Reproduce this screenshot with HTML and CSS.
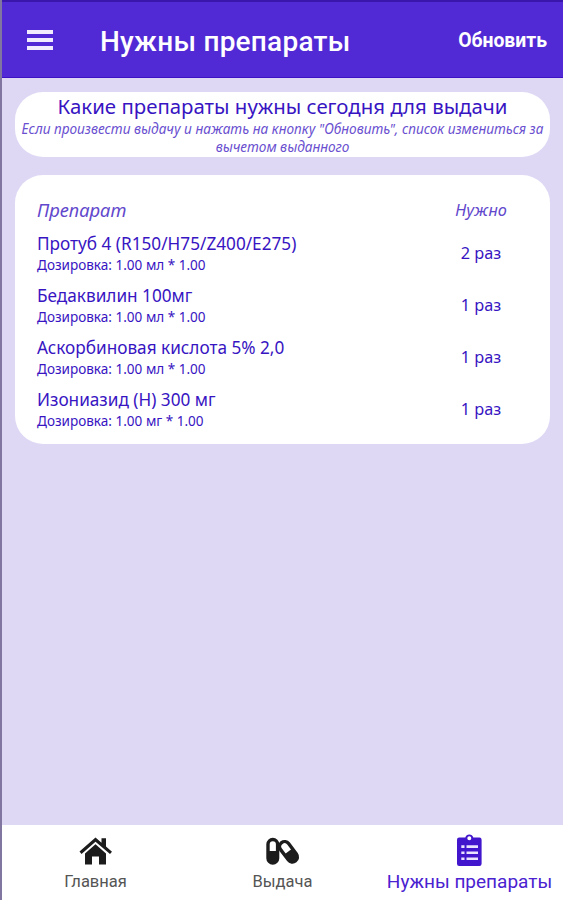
FILE: index.html
```html
<!DOCTYPE html>
<html lang="ru">
  <head>
    <meta charset="UTF-8" />
    <meta name="viewport" content="width=device-width, initial-scale=1.0" />
    <title>Нужны препараты</title>
    <link rel="stylesheet" href="styles.css">
  </head>
  <body>
    <header class="toolbar">
      <button class="menu-button" type="button" aria-label="Меню">
        <span></span>
        <span></span>
        <span></span>
      </button>
      <h1>Нужны препараты</h1>
      <button class="refresh-button" type="button">Обновить</button>
    </header>

    <main class="content">
      <section class="card intro">
        <h2>Какие препараты нужны сегодня для выдачи</h2>
        <p>Если произвести выдачу и нажать на кнопку "Обновить", список измениться за вычетом выданного</p>
      </section>

      <!-- Medicine list -->
      <section class="card list">
        <div class="row list-head">
          <div class="head-name">Препарат</div>
          <div class="count">Нужно</div>
        </div>
        <div class="row">
          <div>
            <div class="name">Протуб 4 (R150/H75/Z400/E275)</div>
            <div class="dose">Дозировка: 1.00 мл * 1.00</div>
          </div>
          <div class="count">2 раз</div>
        </div>
        <div class="row">
          <div>
            <div class="name">Бедаквилин 100мг</div>
            <div class="dose">Дозировка: 1.00 мл * 1.00</div>
          </div>
          <div class="count">1 раз</div>
        </div>
        <div class="row">
          <div>
            <div class="name">Аскорбиновая кислота 5% 2,0</div>
            <div class="dose">Дозировка: 1.00 мл * 1.00</div>
          </div>
          <div class="count">1 раз</div>
        </div>
        <div class="row">
          <div>
            <div class="name">Изониазид (H) 300 мг</div>
            <div class="dose">Дозировка: 1.00 мг * 1.00</div>
          </div>
          <div class="count">1 раз</div>
        </div>
      </section>
    </main>

    <!-- Bottom tabs -->
    <nav class="tabs">
      <a class="tab" href="#">
        <svg width="34" height="34" viewBox="0 0 34 34">
          <path d="M.5 17.5 16.500 3.500l6 5.200V4.200h4.500v8.300l6 5.200-2 2.400L16.500 7.700 2.500 20z" fill="#1c1c1c" />
          <path d="M6 19.500 16.500 10.200 27 19.500V30.500h-7v-8h-7v8H6z" fill="#1c1c1c" />
        </svg>
        <span>Главная</span>
      </a>
      <a class="tab" href="#">
        <svg width="34" height="34" viewBox="0 0 34 34">
          <rect x="2" y="5.5" width="9.6" height="23.5" rx="4.8" fill="#fff" stroke="#1c1c1c" stroke-width="3.4" />
          <path d="M2 17h10v7a5 5 0 0 1-10 0z" fill="#1c1c1c" />
          <g transform="rotate(-37 22.5 17.8)">
            <rect x="17.5" y="6.3" width="10" height="23" rx="5" fill="#fff" stroke="#1c1c1c" stroke-width="3.4" />
            <path d="M17.5 17.5h10v7a5 5 0 0 1-10 0z" fill="#1c1c1c" />
          </g>
        </svg>
        <span>Выдача</span>
      </a>
      <a class="tab active" href="#">
        <svg width="34" height="34" viewBox="0 0 34 34">
          <path fill-rule="evenodd" d="M6.200 3.500h6.100a4.200 4.200 0 0 1 8 0h6.100a2.200 2.200 0 0 1 2.200 2.200v24a2.200 2.200 0 0 1-2.200 2.200H6.200A2.200 2.200 0 0 1 4 29.700v-24a2.200 2.200 0 0 1 2.200-2.200zM16.300 2.200a2 2 0 1 0 0 4 2 2 0 0 0 0-4z" />
          <path d="M8.300 12.600h3.200m2 0H25M8.300 18.700h3.200m2 0H25M8.300 24.700h3.200m2 0H25" stroke="#e9e3ff" stroke-width="2.6" />
        </svg>
        <span>Нужны препараты</span>
      </a>
    </nav>
  </body>
</html>
```

FILE: styles.css
```css
* {
  box-sizing: border-box;
}

body {
  margin: 0;
  height: 900px;
  display: flex;
  flex-direction: column;
  font-family: "Noto Sans", sans-serif;
  color: #3815c2;
  background-color: #ded8f5;
  border-left: 2px solid #80769f;
}

h1,
h2,
p {
  margin: 0;
}

button {
  padding: 0;
  border: none;
  background: none;
  color: #fff;
  font-family: Roboto, sans-serif;
}

.toolbar {
  display: flex;
  align-items: center;
  height: 78px;
  margin-left: -2px;
  padding: 4px 16px 0 27px;
  background-color: #512ad5;
  border-top: 2px solid #3b16ac;
  border-bottom: 1px solid #3d12c4;
  border-left: 2px solid #3b1b9f;
  color: #fff;
}

.menu-button {
  display: flex;
  flex-direction: column;
  gap: 4px;
  width: 26px;
  margin: 0 47px 4px -2px;
}

.menu-button span {
  height: 4px;
  background-color: #f1edff;
}

.toolbar h1 {
  font: 500 28px/36px Roboto, sans-serif;
  letter-spacing: 0.25px;
}

.refresh-button {
  margin: 0 0 3px auto;
  font-size: 19.4px;
  font-weight: 700;
}

.content {
  flex: 1;
  padding: 14px 13px 0;
}

.card {
  background-color: #fff;
  border-radius: 28px;
}

.intro {
  height: 65px;
  margin-bottom: 18px;
  text-align: center;
}

.intro h2 {
  font-size: 20.4px;
  font-weight: 400;
  line-height: 28px;
}

.intro p {
  padding: 0 4px;
  font-size: 13.65px;
  font-style: italic;
  line-height: 18px;
  color: #6a50d0;
}

.list {
  height: 269px;
  padding: 22px 23px 0 22px;
}

.row {
  display: flex;
  align-items: center;
  justify-content: space-between;
  margin-bottom: 8px;
}

.list-head {
  height: 26px;
  font-style: italic;
  color: #6248cc;
}

.head-name {
  padding-bottom: 2px;
  font-size: 18.4px;
}

.name {
  padding-top: 1px;
  font-size: 17.2px;
  line-height: 24px;
}

.dose {
  font-size: 13.55px;
  line-height: 19px;
}

.count {
  width: 92px;
  padding-bottom: 1px;
  font-size: 16.3px;
  text-align: center;
}

.tabs {
  display: grid;
  grid-template-columns: repeat(3, 1fr);
  height: 75px;
  margin-left: -2px;
  background-color: #fff;
  border-left: 2px solid #b5b5b5;
}

.tab {
  display: flex;
  flex-direction: column;
  align-items: center;
  padding-top: 9px;
  font: 16.5px/28px Roboto, sans-serif;
  color: #555;
  text-decoration: none;
  white-space: nowrap;
}

.tab.active {
  font-size: 19px;
  color: #4a22d0;
}

.tab.active svg {
  fill: #4216cc;
}
```
